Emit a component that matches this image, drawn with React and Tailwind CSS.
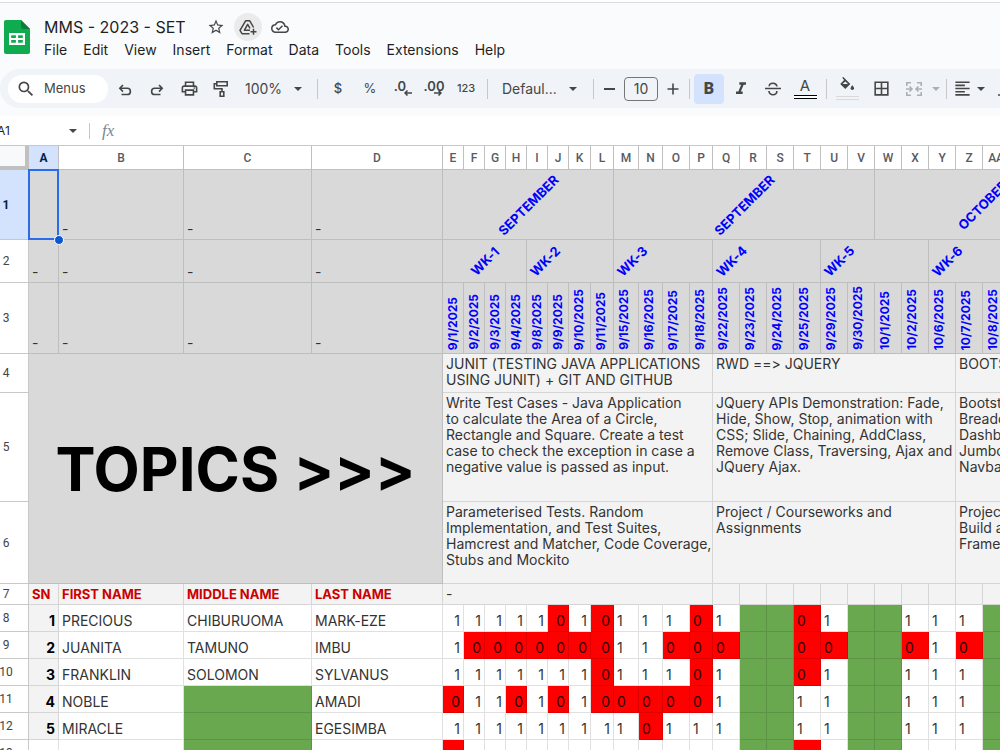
import React from "react";
import {
  MdSearch,
  MdStarBorder,
  MdOutlineCloudDone,
  MdOutlinePrint,
  MdFormatItalic,
  MdStrikethroughS,
  MdBorderAll,
  MdFormatAlignLeft,
} from "react-icons/md";

const MENUS = ["File", "Edit", "View", "Insert", "Format", "Data", "Tools", "Extensions", "Help"];

// The last, unnamed column is the empty space after the final session.
const COLUMNS = [
  ["A", "w-[30px]"], ["B", "w-[125px]"], ["C", "w-[128px]"], ["D", "w-[131px]"],
  ["E", "w-[21px]"], ["F", "w-[21px]"], ["G", "w-[21px]"], ["H", "w-[21px]"],
  ["I", "w-[21px]"], ["J", "w-[21px]"], ["K", "w-[22px]"], ["L", "w-[23px]"],
  ["M", "w-[25px]"], ["N", "w-[24px]"], ["O", "w-[27px]"], ["P", "w-[23px]"],
  ["Q", "w-[27px]"], ["R", "w-[27px]"], ["S", "w-[27px]"], ["T", "w-[27px]"],
  ["U", "w-[27px]"], ["V", "w-[27px]"], ["W", "w-[27px]"], ["X", "w-[27px]"],
  ["Y", "w-[27px]"], ["Z", "w-[27px]"], ["AA", "w-[27px]"], ["", "w-[81px]"],
];

const DATES = [
  "9/1/2025", "9/2/2025", "9/3/2025", "9/4/2025", "9/8/2025", "9/9/2025", "9/10/2025",
  "9/11/2025", "9/15/2025", "9/16/2025", "9/17/2025", "9/18/2025", "9/22/2025",
  "9/23/2025", "9/24/2025", "9/25/2025", "9/29/2025", "9/30/2025", "10/1/2025",
  "10/2/2025", "10/6/2025", "10/7/2025", "10/8/2025", "",
];

// One character per session from column E on: 1 present, 0 absent, g holiday, r absent unfilled, . empty.
const STUDENTS = [
  { row: 8, sn: "1", first: "PRECIOUS", middle: "CHIBURUOMA", last: "MARK-EZE", marks: "1111101011101gg01gg111g." },
  { row: 9, sn: "2", first: "JUANITA", middle: "TAMUNO", last: "IMBU", marks: "1000000011000gg00gg010g." },
  { row: 10, sn: "3", first: "FRANKLIN", middle: "SOLOMON", last: "SYLVANUS", marks: "1111111011101gg01gg111g." },
  { row: 11, sn: "4", first: "NOBLE", middle: "", last: "AMADI", marks: "0110101000001gg11gg111g." },
  { row: 12, sn: "5", first: "MIRACLE", middle: "", last: "EGESIMBA", marks: "1111111110111gg11gg111g." },
  { row: 13, sn: "", first: "", middle: "", last: "", marks: "r............ggr.gg...g." },
];

const TOPICS = [
  {
    row: 4,
    height: "h-[39px]",
    cells: [
      ["JUNIT (TESTING JAVA APPLICATIONS", "USING JUNIT) + GIT AND GITHUB"],
      ["RWD ==> JQUERY"],
      ["BOOTSTRAP"],
    ],
  },
  {
    row: 5,
    height: "h-[109px]",
    cells: [
      ["Write Test Cases - Java Application", "to calculate the Area of a Circle,", "Rectangle and Square. Create a test", "case to check the exception in case a", "negative value is passed as input."],
      ["JQuery APIs Demonstration: Fade,", "Hide, Show, Stop, animation with", "CSS; Slide, Chaining, AddClass,", "Remove Class, Traversing, Ajax and", "JQuery Ajax."],
      ["Bootstrap", "Breadcrumb", "Dashboard", "Jumbotron", "Navbar"],
    ],
  },
  {
    row: 6,
    height: "h-[82px]",
    cells: [
      ["Parameterised Tests. Random", "Implementation, and Test Suites,", "Hamcrest and Matcher, Code Coverage,", "Stubs and Mockito"],
      ["Project / Courseworks and", "Assignments"],
      ["Project", "Build a", "Framework"],
    ],
  },
];

const TOPIC_SPANS = [12, 9, 3];
const LINE = "border-r border-b border-black/12";

function RowHead({ n, selected }) {
  return (
    <th
      scope="row"
      className={`border-r border-b border-[#c8c8c8] pr-4 text-center font-[Roboto,sans-serif] text-xs leading-4 ${
        selected ? "bg-[#d3e3fd] font-bold text-[#041e49]" : "bg-white font-normal text-[#444]"
      }`}
    >
      <span className="flex w-3 justify-center">{n}</span>
    </th>
  );
}

function Dash() {
  return <td className={`${LINE} bg-[#d9d9d9] px-[3px] pb-0.5 align-bottom leading-4`}>-</td>;
}

function Slanted({ span, center, children }) {
  return (
    <td colSpan={span} className={`${LINE} bg-[#d9d9d9] text-[13px] font-bold text-[#0000ff]`}>
      <div className={`flex items-center ${center ? "justify-center" : ""}`}>
        <span className="-rotate-45 leading-4 whitespace-nowrap">{children}</span>
      </div>
    </td>
  );
}

function Mark({ value, index }) {
  const align = index < 8 ? "text-right" : "text-left";
  const fill = value === "0" || value === "r" ? "bg-[#ff0000]" : value === "g" ? "bg-[#6aa84f]" : "bg-white";
  const color = value === "0" ? "text-[#300000]" : "text-[#333]";
  return (
    <td className={`${LINE} ${fill} ${align} ${color} px-[3px] pb-0.5 align-bottom leading-4`}>
      {value === "0" || value === "1" ? value : ""}
    </td>
  );
}

function ToolButton({ label, width = "w-8", className = "", children }) {
  return (
    <button
      type="button"
      aria-label={label}
      className={`flex h-[30px] shrink-0 items-center justify-center rounded text-[#444746] ${width} ${className}`}
    >
      {children}
    </button>
  );
}

function Divider() {
  return (
    <span className="flex w-2.5 shrink-0 justify-center">
      <span className="h-5 w-px bg-[#c7c7c7]" />
    </span>
  );
}

function Caret({ className = "" }) {
  return (
    <svg viewBox="0 0 8 4" className={`h-1 w-2 shrink-0 ${className}`} fill="currentColor" aria-hidden="true">
      <path d="M0 0h8L4 4z" />
    </svg>
  );
}

function SheetsLogo() {
  return (
    <svg viewBox="0 0 26 34" className="mt-[7px] h-[34px] w-[26px] shrink-0" role="img" aria-label="Sheets">
      <path d="M2 0h15l9 9v23a2 2 0 0 1-2 2H2a2 2 0 0 1-2-2V2a2 2 0 0 1 2-2z" fill="#0fab4f" />
      <path d="M17 0l9 9h-7a2 2 0 0 1-2-2z" fill="#0a7d3b" />
      <path d="M5 13h16v12H5zM7.200 15.200v2.700h4.700v-2.700zM14.100 15.200v2.700h4.700v-2.700zM7.200 20.100v2.700h4.700v-2.700zM14.100 20.100v2.700h4.700v-2.700z" fill="#fff" fillRule="evenodd" />
    </svg>
  );
}

function Header() {
  return (
    <header className="flex border-t border-[#dcdcdc] bg-[#f9fbfd] pt-2.5 pb-2.5 pl-1">
      <SheetsLogo />
      <div className="pl-3.5">
        <div className="flex h-7 items-center">
          <h1 className="text-base whitespace-nowrap text-[#1f1f1f]">MMS - 2023 - SET</h1>
          <div className="flex items-center gap-1 pl-4 text-[#444746]">
            <button type="button" aria-label="Star" className="flex size-7 items-center justify-center">
              <MdStarBorder className="size-[18px]" />
            </button>
            <button type="button" aria-label="Add shortcut to Drive" className="flex size-7 items-center justify-center rounded-full bg-[#ebebeb]">
              <svg viewBox="0 0 18 16" className="h-4 w-[18px]" fill="none" stroke="currentColor" strokeWidth="1.500" strokeLinejoin="round">
                <path d="M14.600 8.500L10.800 1.800H6.600L1 11.400L3 14.700H10.500" />
                <path d="M11 11.200H5.400L8.700 5.300L11 9.300" />
                <path d="M14.500 9.700V15.700M11.500 12.700H17.500" />
              </svg>
            </button>
            <button type="button" aria-label="Document status" className="flex size-7 items-center justify-center">
              <MdOutlineCloudDone className="size-[18px]" />
            </button>
          </div>
        </div>
        <nav className="flex h-[18px] items-center gap-4 text-sm text-[#1f1f1f]">
          {MENUS.map((m) => (
            <button key={m} type="button">{m}</button>
          ))}
        </nav>
      </div>
    </header>
  );
}

function Toolbar() {
  return (
    <div className="bg-[#f9fbfd] pb-2">
      <div role="toolbar" aria-label="Formatting" className="flex h-[39px] items-center overflow-hidden rounded-l-[20px] bg-[#f0f4f9] pl-2 text-[#444746]">
        <button type="button" className="mr-px flex h-7 w-[100px] shrink-0 items-center gap-2 rounded-full bg-white pl-2 text-[13px]">
          <MdSearch className="size-5" />
          Menus
        </button>
        <ToolButton label="Undo">
          <svg viewBox="0 0 16 16" className="size-4" fill="none" stroke="currentColor" strokeWidth="1.6">
            <path d="M6 4L2.800 7.300L6 10.600M3 7.300H10.300a3.100 3.100 0 0 1 0 6.200H4.500" />
          </svg>
        </ToolButton>
        <ToolButton label="Redo">
          <svg viewBox="0 0 16 16" className="size-4" fill="none" stroke="currentColor" strokeWidth="1.6">
            <path d="M10 4L13.200 7.300L10 10.600M13 7.300H5.700a3.100 3.100 0 0 0 0 6.200H11.500" />
          </svg>
        </ToolButton>
        <ToolButton label="Print">
          <MdOutlinePrint className="size-[19px]" />
        </ToolButton>
        <ToolButton label="Paint format">
          <svg viewBox="0 0 16 18" className="h-[18px] w-4" fill="none" stroke="currentColor" strokeWidth="1.600">
            <path d="M3.800 1.800H14.200V5.800H3.800zM3.800 3.800H1.300V8.700H9V11.700M7.200 11.800H10.800V16.200H7.200z" />
          </svg>
        </ToolButton>
        <button type="button" className="flex h-[30px] w-[75px] shrink-0 items-center justify-between pr-2.5 pl-2 text-sm">
          100% <Caret />
        </button>
        <Divider />
        <ToolButton label="Format as currency" className="text-[13px] font-medium">$</ToolButton>
        <ToolButton label="Format as percent" className="text-[13px]">%</ToolButton>
        <ToolButton label="Decrease decimal places">
          <span className="relative -mt-1.5 mr-1 text-[13px] leading-4 font-semibold">
            .0
            <svg viewBox="0 0 8 6" className="absolute top-3 left-2.5 h-1.5 w-2" fill="none" stroke="currentColor" strokeWidth="1.500">
              <path d="M8 3H1M3.500 .5L1 3L3.500 5.500" />
            </svg>
          </span>
        </ToolButton>
        <ToolButton label="Increase decimal places">
          <span className="relative -mt-1.5 text-[13px] leading-4 font-semibold">
            .00
            <svg viewBox="0 0 8 6" className="absolute top-3 left-2.5 h-1.5 w-2" fill="none" stroke="currentColor" strokeWidth="1.500">
              <path d="M0 3H7M4.500 .5L7 3L4.500 5.500" />
            </svg>
          </span>
        </ToolButton>
        <ToolButton label="More formats" className="text-[11px] font-medium">123</ToolButton>
        <Divider />
        <button type="button" className="flex h-[30px] w-24 shrink-0 items-center justify-between pr-[11px] pl-2.5 text-sm">
          Defaul... <Caret />
        </button>
        <Divider />
        <ToolButton label="Decrease font size" width="w-[22px]">
          <span className="h-0.5 w-[11px] bg-[#444746]" />
        </ToolButton>
        <input
          aria-label="Font size"
          defaultValue="10"
          className="mx-1 h-6 w-[34px] shrink-0 rounded border border-[#747775] bg-transparent text-center text-sm outline-none"
        />
        <ToolButton label="Increase font size" width="w-[22px]">
          <svg viewBox="0 0 12 12" className="size-3" stroke="currentColor" strokeWidth="1.600">
            <path d="M6 .5v11M.5 6h11" />
          </svg>
        </ToolButton>
        <Divider />
        <ToolButton label="Bold" width="w-[30px]" className="bg-[#d3e3fd] font-[Roboto,sans-serif] text-base font-black text-[#041e49]">B</ToolButton>
        <ToolButton label="Italic" className="ml-px">
          <MdFormatItalic className="size-5" />
        </ToolButton>
        <ToolButton label="Strikethrough">
          <svg viewBox="0 0 16 14" className="h-3.5 w-4" fill="none" stroke="currentColor" strokeWidth="1.600">
            <path d="M0 6.500H16M12 4.400C11.600 2.200 10.200 1.200 8 1.200C5.600 1.200 4.200 2.400 4.200 4.200M3.900 9C4.200 11.400 5.700 12.700 8 12.700C10.500 12.700 12 11.300 11.800 9" />
          </svg>
        </ToolButton>
        <ToolButton label="Text color">
          <span className="flex flex-col items-center">
            <span className="text-[15px] leading-4">A</span>
            <span className="mt-px h-1 w-[23px] border-y border-black bg-white" />
          </span>
        </ToolButton>
        <Divider />
        <ToolButton label="Fill color">
          <span className="flex flex-col items-center">
            <svg viewBox="0 0 16 15" className="h-[15px] w-4" fill="currentColor">
              <path d="M3.200 .8L4.300 0L11.300 7L6.300 12L1.200 7L5.100 3.100zM6.300 4.400L3.500 7.100H9z" fillRule="evenodd" />
              <path d="M13.300 8.300s1.700 1.900 1.700 3a1.700 1.700 0 0 1-3.400 0c0-1.100 1.700-3 1.700-3z" />
            </svg>
            <span className="mt-1 h-1 w-[23px] border-y border-[#d9d9d9] bg-[#f3f3f3]" />
          </span>
        </ToolButton>
        <ToolButton label="Borders" className="ml-0.5">
          <MdBorderAll className="size-[19px]" />
        </ToolButton>
        <ToolButton label="Merge cells" width="w-[34px]" className="text-[#adb0b3]">
          <svg viewBox="0 0 16 14" className="h-3.5 w-4" fill="none" stroke="currentColor" strokeWidth="1.600">
            <path d="M5 .8H.8V4M11 .8H15.200V4M5 13.200H.8V10M11 13.200H15.200V10M0 7H5.500M3.500 4.500L6 7L3.500 9.500M16 7H10.500M12.500 4.500L10 7L12.500 9.500" />
          </svg>
        </ToolButton>
        <ToolButton label="Merge type" width="w-2.5" className="text-[#adb0b3]">
          <Caret />
        </ToolButton>
        <Divider />
        <ToolButton label="Horizontal align" width="w-[22px]">
          <MdFormatAlignLeft className="size-[19px]" />
        </ToolButton>
        <ToolButton label="Align options" width="w-4">
          <Caret />
        </ToolButton>
        <ToolButton label="Vertical align">
          <svg viewBox="0 0 14 14" className="size-3.5" fill="none" stroke="currentColor" strokeWidth="1.600">
            <path d="M0 13H14M7 0V9M3.500 6L7 9.500L10.500 6" />
          </svg>
        </ToolButton>
      </div>
    </div>
  );
}

function FormulaBar() {
  return (
    <div className="flex h-[30px] shrink-0 items-center border-b border-[#c7c7c7] bg-white">
      <input aria-label="Name box" defaultValue="A1" className="-ml-[3px] w-[71px] text-xs text-[#1f1f1f] outline-none" />
      <button type="button" aria-label="Named ranges" className="flex h-5 w-2.5 items-center justify-center text-[#444746]">
        <Caret />
      </button>
      <span className="ml-[11px] h-4 w-px bg-[#c7c7c7]" />
      <label htmlFor="formula" className="pl-3 font-['Liberation_Serif',serif] text-[17px] text-[#80868b] italic">fx</label>
      <input id="formula" className="min-w-0 flex-1 px-2 text-sm outline-none" />
    </div>
  );
}

function Sheet() {
  return (
    <main className="min-h-0 flex-1 overflow-hidden bg-white">
      <table className="w-max table-fixed border-separate border-spacing-0 text-sm text-[#333] [font-feature-settings:'calt'_0]">
        <colgroup>
          <col className="w-[29px]" />
          {COLUMNS.map(([name, width]) => (
            <col key={name} className={width} />
          ))}
        </colgroup>
        <thead>
          <tr className="h-6">
            <td className="border-r-4 border-b-4 border-[#c0c0c0] bg-[#f8f9fa]" />
            {COLUMNS.map(([name]) => (
              <th
                key={name}
                scope="col"
                className={`border-r border-b border-[#c0c0c0] font-[Roboto,sans-serif] text-xs leading-4 ${
                  name === "A" ? "bg-[#d3e3fd] font-bold text-[#041e49]" : "bg-white font-medium text-[#575b5f]"
                }`}
              >
                {name}
              </th>
            ))}
          </tr>
        </thead>
        <tbody>
          <tr className="h-[70px]">
            <RowHead n={1} selected />
            <td className={`${LINE} relative bg-[#d9d9d9]`}>
              <span className="absolute -inset-px border-2 border-[#2b6de8]" />
              <span className="absolute -right-1.5 -bottom-1.5 z-10 size-2.5 rounded-full border border-white bg-[#0b57d0]" />
            </td>
            <Dash />
            <Dash />
            <Dash />
            <Slanted span={8} center>SEPTEMBER</Slanted>
            <Slanted span={10} center>SEPTEMBER</Slanted>
            <Slanted span={6} center>OCTOBER</Slanted>
          </tr>
          <tr className="h-[43px]">
            <RowHead n={2} />
            <Dash />
            <Dash />
            <Dash />
            <Dash />
            <Slanted span={4} center>WK-1</Slanted>
            <Slanted span={4}>WK-2</Slanted>
            <Slanted span={4}>WK-3</Slanted>
            <Slanted span={4}>WK-4</Slanted>
            <Slanted span={4}>WK-5</Slanted>
            <Slanted span={4}>WK-6</Slanted>
          </tr>
          <tr className="h-[71px]">
            <RowHead n={3} />
            <Dash />
            <Dash />
            <Dash />
            <Dash />
            {DATES.map((d) => (
              <td key={d} className={`${LINE} bg-[#d9d9d9] pb-[3px] pl-0.5 align-bottom font-bold text-[#0000ff]`}>
                <span className="block w-4 rotate-180 text-xs leading-4 whitespace-nowrap [writing-mode:vertical-rl]">{d}</span>
              </td>
            ))}
          </tr>
          {TOPICS.map((t, i) => (
            <tr key={t.row} className={t.height}>
              <RowHead n={t.row} />
              {i === 0 && (
                <td colSpan={4} rowSpan={3} className={`${LINE} bg-[#d9d9d9] text-center text-[60px] leading-none font-bold whitespace-nowrap text-black`}>
                  TOPICS &gt;&gt;&gt;
                </td>
              )}
              {t.cells.map((lines, c) => (
                <td key={c} colSpan={TOPIC_SPANS[c]} className={`${LINE} bg-[#f3f3f3] pt-0.5 pl-[3px] align-top leading-4 whitespace-nowrap`}>
                  {lines.map((l) => (
                    <div key={l}>{l}</div>
                  ))}
                </td>
              ))}
            </tr>
          ))}
          <tr className="h-[21px]">
            <RowHead n={7} />
            {["SN", "FIRST NAME", "MIDDLE NAME", "LAST NAME"].map((h) => (
              <td key={h} className={`${LINE} bg-[#f3f3f3] pl-[3px] text-[13px] leading-4 font-bold text-[#cc0000]`}>{h}</td>
            ))}
            <td colSpan={12} className={`${LINE} bg-[#f3f3f3] pl-[3px] leading-4`}>-</td>
            {COLUMNS.slice(16).map(([name]) => (
              <td key={name} className={`${LINE} bg-[#f3f3f3]`} />
            ))}
          </tr>
          {STUDENTS.map((s) => (
            <tr key={s.row} className="h-[27px]">
              <RowHead n={s.row} />
              <td className={`${LINE} pr-[3px] pb-0.5 text-right align-bottom leading-4 font-bold text-black ${s.sn ? "bg-[#f3f3f3]" : ""}`}>{s.sn}</td>
              <td className={`${LINE} pb-0.5 pl-[3px] align-bottom leading-4`}>{s.first}</td>
              <td className={`${LINE} pb-0.5 pl-[3px] align-bottom leading-4 ${s.middle ? "" : "bg-[#6aa84f]"}`}>{s.middle}</td>
              <td className={`${LINE} pb-0.5 pl-[3px] align-bottom leading-4`}>{s.last}</td>
              {s.marks.split("").map((m, i) => (
                <Mark key={i} value={m} index={i} />
              ))}
            </tr>
          ))}
        </tbody>
      </table>
    </main>
  );
}

export default function App() {
  return (
    <div className="flex h-screen flex-col overflow-hidden bg-white pt-0.5 font-[Inter,sans-serif]">
      <Header />
      <Toolbar />
      <FormulaBar />
      <Sheet />
    </div>
  );
}
